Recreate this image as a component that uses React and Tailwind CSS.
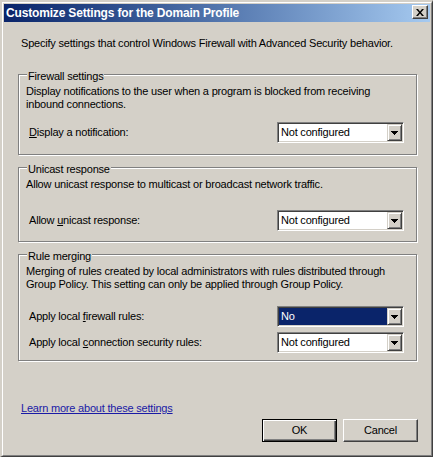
import React from 'react';

function Arrow() {
  return (
    <svg width="7" height="4" viewBox="0 0 7 4" shapeRendering="crispEdges">
      <rect x="0" y="0" width="7" height="1" fill="#000" />
      <rect x="1" y="1" width="5" height="1" fill="#000" />
      <rect x="2" y="2" width="3" height="1" fill="#000" />
      <rect x="3" y="3" width="1" height="1" fill="#000" />
    </svg>
  );
}

function Dropdown({ value, selected }) {
  return (
    <div className="flex h-[21px] w-[127px] border border-t-[#808080] border-l-[#808080] border-r-white border-b-white bg-white p-px shadow-[inset_1px_1px_0_#404040,inset_-1px_-1px_0_#d4d0c8]">
      <div
        className={`flex flex-1 items-center pl-[2px] ${
          selected ? 'bg-[#0a246a] text-white' : 'text-black'
        }`}
      >
        {value}
      </div>
      <div className="flex w-[15px] items-center justify-center border border-t-[#d4d0c8] border-l-[#d4d0c8] border-r-[#404040] border-b-[#404040] bg-[#d4d0c8] shadow-[inset_1px_1px_0_#fff,inset_-1px_-1px_0_#808080]">
        <Arrow />
      </div>
    </div>
  );
}

function Group({ title, className = '', children }) {
  return (
    <div
      className={`flex flex-col border border-[#808080] shadow-[inset_1px_1px_0_#fff,1px_1px_0_#fff] ${className}`}
    >
      <span className="-mt-[5px] ml-[8px] self-start bg-[#d4d0c8] px-px">{title}</span>
      {children}
    </div>
  );
}

function Row({ className = '', label, value, selected }) {
  return (
    <div className={`flex h-[21px] items-center justify-between pl-[10px] pr-[12px] ${className}`}>
      <span>{label}</span>
      <Dropdown value={value} selected={selected} />
    </div>
  );
}

export default function App() {
  return (
    <div className="h-[457px] w-[433px] border-t-2 border-l-2 border-r border-b border-t-[#d4d0c8] border-l-[#d4d0c8] border-r-[#404040] border-b-[#404040] bg-[#d4d0c8] font-['Liberation_Sans',Arial,sans-serif] text-[11px] leading-[13px] tracking-[-0.2px] text-black">
      <div className="flex h-full flex-col border border-t-white border-l-white border-r-[#808080] border-b-[#808080] p-px">
        {/* Title bar */}
        <div className="flex h-[18px] items-start bg-gradient-to-r from-[#0a246a] to-[#a6caf0] pl-[2px] pr-[2px]">
          <span className="mt-[2px] flex-1 text-[12px] font-bold leading-[14px] tracking-[-0.17px] text-white">
            Customize Settings for the Domain Profile
          </span>
          <div className="mt-px flex h-[14px] w-[16px] items-center justify-center border border-t-white border-l-white border-r-[#404040] border-b-[#404040] bg-[#d4d0c8] shadow-[inset_-1px_-1px_0_#808080]">
            <svg width="8" height="7" viewBox="0 0 8 7">
              <path d="M0 0h2l2 2.4L6 0h2L5 3.5 8 7H6L4 4.6 2 7H0l3-3.5z" fill="#000" />
            </svg>
          </div>
        </div>

        {/* Body */}
        <div className="flex flex-1 flex-col pl-[14px] pr-[13px]">
          <p className="ml-[3px] mt-[15px]">
            Specify settings that control Windows Firewall with Advanced Security behavior.
          </p>

          <Group title="Firewall settings" className="mt-[24px] pb-[11px]">
            <p className="mt-[2px] whitespace-nowrap pl-[7px]">
              Display notifications to the user when a program is blocked from receiving
              <br />
              inbound connections.
            </p>
            <Row
              className="mt-[11px]"
              label={
                <>
                  <u>D</u>isplay a notification:
                </>
              }
              value="Not configured"
            />
          </Group>

          <Group title="Unicast response" className="mt-[12px] pb-[10px]">
            <p className="mt-[2px] whitespace-nowrap pl-[7px]">
              Allow unicast response to multicast or broadcast network traffic.
            </p>
            <Row
              className="mt-[19px]"
              label={
                <>
                  Allow <u>u</u>nicast response:
                </>
              }
              value="Not configured"
            />
          </Group>

          <Group title="Rule merging" className="mt-[12px] pb-[7px]">
            <p className="mt-[2px] whitespace-nowrap pl-[7px]">
              Merging of rules created by local administrators with rules distributed through
              <br />
              Group Policy. This setting can only be applied through Group Policy.
            </p>
            <Row
              className="mt-[15px]"
              label={
                <>
                  Apply local <u>f</u>irewall rules:
                </>
              }
              value="No"
              selected
            />
            <Row
              className="mt-[5px]"
              label={
                <>
                  Apply local <u>c</u>onnection security rules:
                </>
              }
              value="Not configured"
            />
          </Group>

          <a className="ml-[3px] mt-[41px] self-start text-[#1a1aa6] underline">
            Learn more about these settings
          </a>

          <div className="-mr-px mt-[4px] flex justify-end gap-[6px]">
            <button
              type="button"
              className="h-[23px] w-[75px] border border-black bg-[#d4d0c8] shadow-[inset_1px_1px_0_#fff,inset_-1px_-1px_0_#404040,inset_-2px_-2px_0_#808080]"
            >
              OK
            </button>
            <button
              type="button"
              className="h-[23px] w-[75px] border border-t-white border-l-white border-r-[#404040] border-b-[#404040] bg-[#d4d0c8] shadow-[inset_-1px_-1px_0_#808080]"
            >
              Cancel
            </button>
          </div>
        </div>
      </div>
    </div>
  );
}
